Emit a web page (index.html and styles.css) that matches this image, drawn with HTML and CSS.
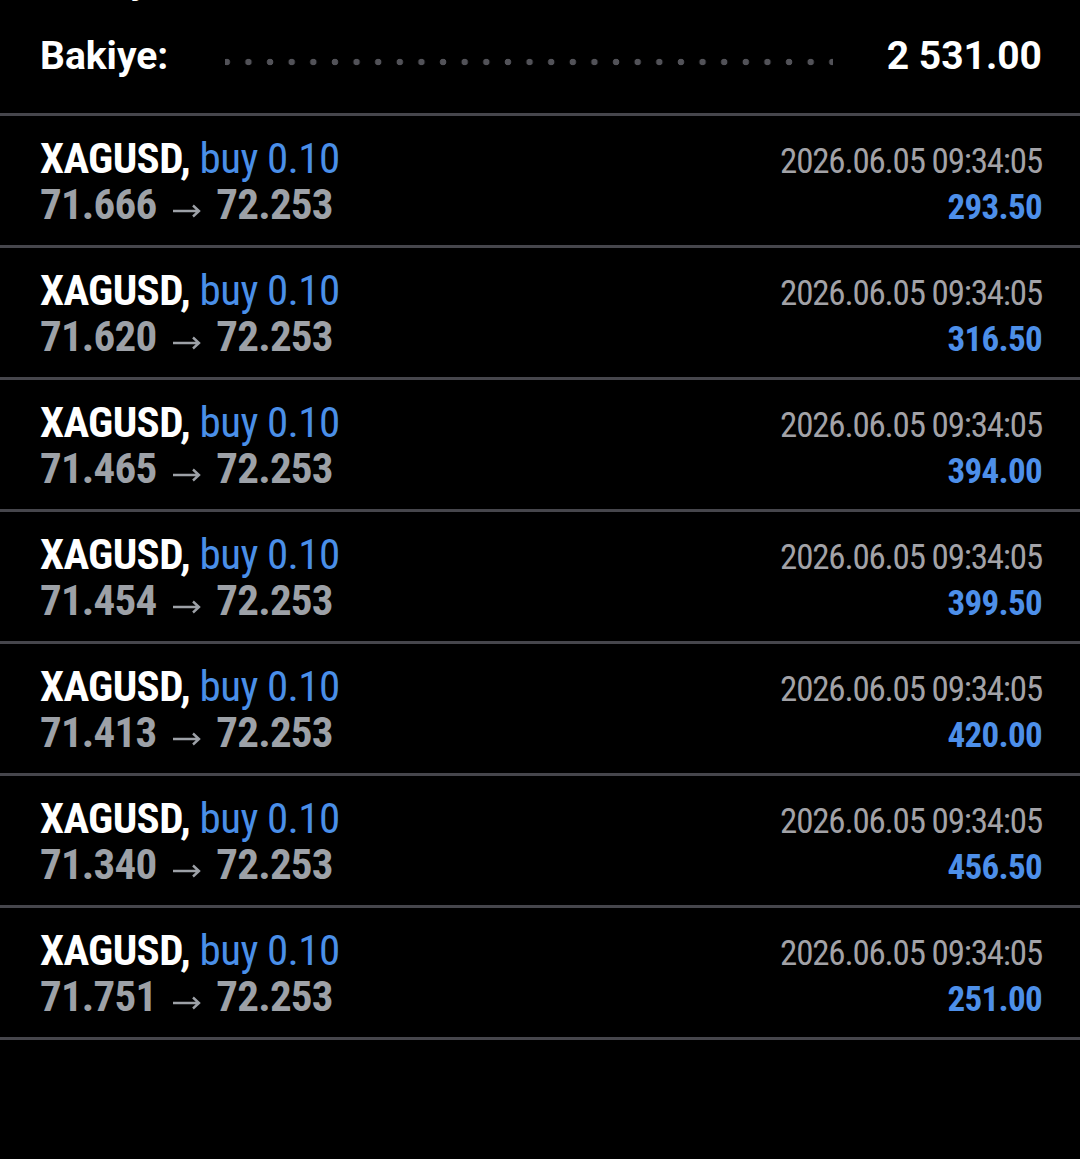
FILE: index.html
```html
<!DOCTYPE html>
<html lang="tr">
<head>
    <meta charset="UTF-8">
    <meta name="viewport" content="width=device-width, initial-scale=1.0">
    <title>Geçmiş</title>
    <link rel="stylesheet" href="styles.css">
</head>
<body>
    <div class="summary">
        <div class="sum-row">
            <span class="sum-label">Para yatırma:</span>
            <span class="leader"></span>
            <span class="sum-value">2 000.00</span>
        </div>
        <div class="sum-row">
            <span class="sum-label">Bakiye:</span>
            <span class="leader"></span>
            <span class="sum-value">2 531.00</span>
        </div>
    </div>

    <div class="deals">
        <div class="deal">
            <div class="line">
                <span class="symbol">XAGUSD, <span class="side">buy 0.10</span></span>
                <span class="time">2026.06.05 09:34:05</span>
            </div>
            <div class="line">
                <span class="prices">71.666<svg class="arrow" width="30" height="16" viewBox="0 0 30 16"><path d="M1 9H27M21 3.5L27 9L21 14.5" fill="none" stroke="#9da1a7" stroke-width="2.4"/></svg>72.253</span>
                <span class="profit">293.50</span>
            </div>
        </div>
        <div class="deal">
            <div class="line">
                <span class="symbol">XAGUSD, <span class="side">buy 0.10</span></span>
                <span class="time">2026.06.05 09:34:05</span>
            </div>
            <div class="line">
                <span class="prices">71.620<svg class="arrow" width="30" height="16" viewBox="0 0 30 16"><path d="M1 9H27M21 3.5L27 9L21 14.5" fill="none" stroke="#9da1a7" stroke-width="2.4"/></svg>72.253</span>
                <span class="profit">316.50</span>
            </div>
        </div>
        <div class="deal">
            <div class="line">
                <span class="symbol">XAGUSD, <span class="side">buy 0.10</span></span>
                <span class="time">2026.06.05 09:34:05</span>
            </div>
            <div class="line">
                <span class="prices">71.465<svg class="arrow" width="30" height="16" viewBox="0 0 30 16"><path d="M1 9H27M21 3.5L27 9L21 14.5" fill="none" stroke="#9da1a7" stroke-width="2.4"/></svg>72.253</span>
                <span class="profit">394.00</span>
            </div>
        </div>
        <div class="deal">
            <div class="line">
                <span class="symbol">XAGUSD, <span class="side">buy 0.10</span></span>
                <span class="time">2026.06.05 09:34:05</span>
            </div>
            <div class="line">
                <span class="prices">71.454<svg class="arrow" width="30" height="16" viewBox="0 0 30 16"><path d="M1 9H27M21 3.5L27 9L21 14.5" fill="none" stroke="#9da1a7" stroke-width="2.4"/></svg>72.253</span>
                <span class="profit">399.50</span>
            </div>
        </div>
        <div class="deal">
            <div class="line">
                <span class="symbol">XAGUSD, <span class="side">buy 0.10</span></span>
                <span class="time">2026.06.05 09:34:05</span>
            </div>
            <div class="line">
                <span class="prices">71.413<svg class="arrow" width="30" height="16" viewBox="0 0 30 16"><path d="M1 9H27M21 3.5L27 9L21 14.5" fill="none" stroke="#9da1a7" stroke-width="2.4"/></svg>72.253</span>
                <span class="profit">420.00</span>
            </div>
        </div>
        <div class="deal">
            <div class="line">
                <span class="symbol">XAGUSD, <span class="side">buy 0.10</span></span>
                <span class="time">2026.06.05 09:34:05</span>
            </div>
            <div class="line">
                <span class="prices">71.340<svg class="arrow" width="30" height="16" viewBox="0 0 30 16"><path d="M1 9H27M21 3.5L27 9L21 14.5" fill="none" stroke="#9da1a7" stroke-width="2.4"/></svg>72.253</span>
                <span class="profit">456.50</span>
            </div>
        </div>
        <div class="deal">
            <div class="line">
                <span class="symbol">XAGUSD, <span class="side">buy 0.10</span></span>
                <span class="time">2026.06.05 09:34:05</span>
            </div>
            <div class="line">
                <span class="prices">71.751<svg class="arrow" width="30" height="16" viewBox="0 0 30 16"><path d="M1 9H27M21 3.5L27 9L21 14.5" fill="none" stroke="#9da1a7" stroke-width="2.4"/></svg>72.253</span>
                <span class="profit">251.00</span>
            </div>
        </div>
    </div>
</body>
</html>
```

FILE: styles.css
```css
/* dark history list */
body {
    margin: 0;
    padding: 0;
    background: #000000;
    color: #ffffff;
    font-family: Roboto, "Liberation Sans", sans-serif;
    overflow: hidden;
}

.summary {
    margin-top: -58px;
    padding: 0 38px 19px 40px;
}

.sum-row {
    display: flex;
    align-items: center;
    height: 76px;
    line-height: 76px;
    font-size: 39px;
    font-weight: bold;
}

.leader {
    flex: 1;
    height: 76px;
    margin: 0 54px 0 57px;
    background-image: radial-gradient(circle, #525258 3px, transparent 3.6px);
    background-size: 21.64px 10px;
    background-repeat: repeat-x;
    background-position: -9px 39px;
}

/* deals */
.deal {
    border-top: 3px solid #46464c;
    padding: 19px 38px 18px 40px;
}

.deal:last-child {
    border-bottom: 3px solid #46464c;
}

.line {
    display: flex;
    justify-content: space-between;
    align-items: baseline;
    height: 46px;
    line-height: 46px;
    font-stretch: condensed;
}

.symbol {
    font-size: 43px;
    font-weight: bold;
    letter-spacing: -0.6px;
    color: #ffffff;
}

.side {
    font-weight: normal;
    color: #4a8fe8;
}

.prices {
    font-size: 43px;
    font-weight: bold;
    letter-spacing: -0.8px;
    color: #9da1a7;
}

.arrow {
    margin: 0 14px 0 16px;
    vertical-align: 1px;
}

.time {
    font-size: 35px;
    letter-spacing: -1.2px;
    color: #a2a2a7;
}

.profit {
    font-size: 35px;
    font-weight: bold;
    letter-spacing: -0.7px;
    color: #4d8fe9;
}
```
